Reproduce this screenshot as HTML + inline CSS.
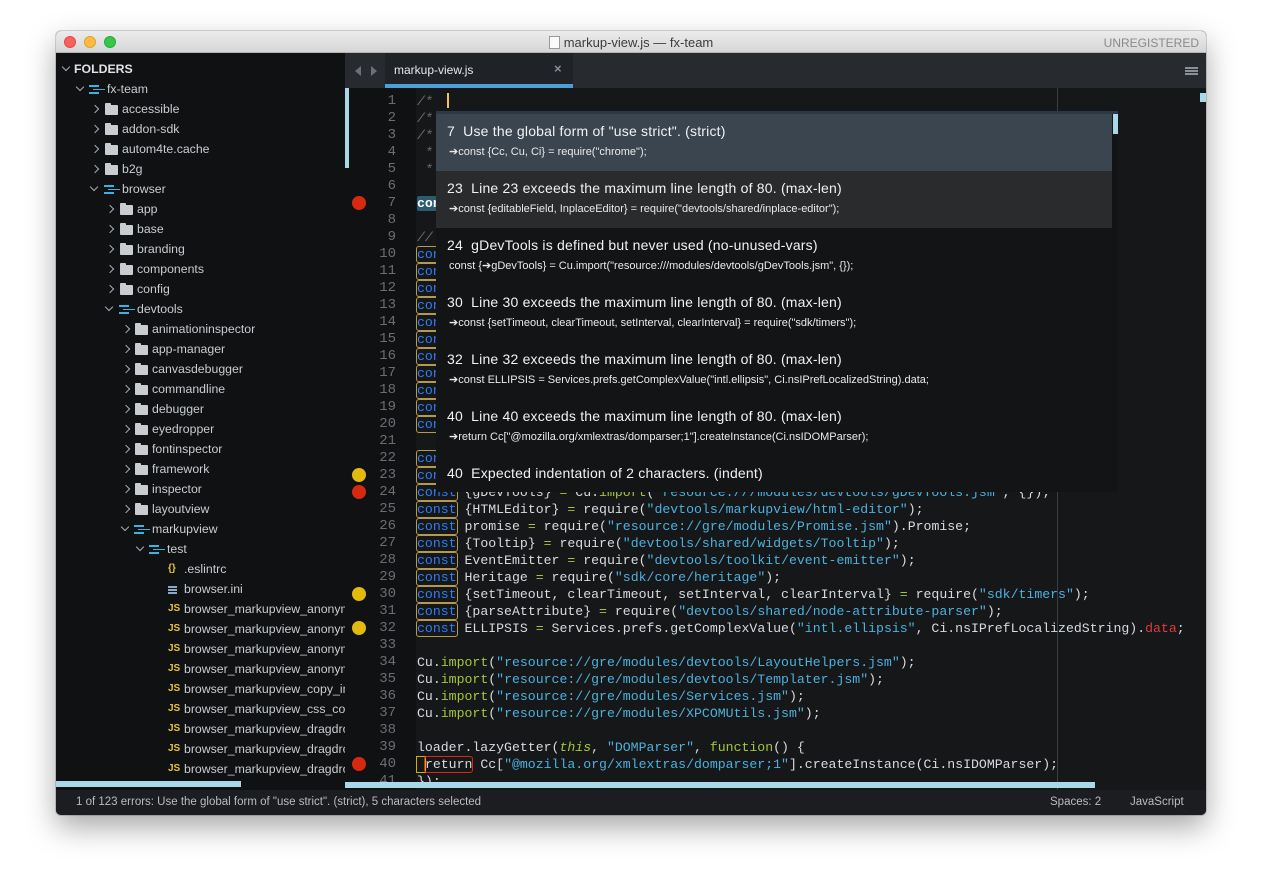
<!DOCTYPE html>
<html><head><meta charset="utf-8"><style>
*{margin:0;padding:0;box-sizing:border-box}
body{width:1262px;height:896px;background:#fff;position:relative;overflow:hidden;font-family:"Liberation Sans",sans-serif}
#win{position:absolute;left:56px;top:31px;width:1150px;height:784px;border-radius:5px;overflow:hidden;background:#161719;box-shadow:0 12px 30px rgba(0,0,0,.35),0 0 0 1px rgba(0,0,0,.15)}
#title{position:absolute;left:0;top:0;width:1150px;height:22px;background:linear-gradient(#ececec,#d6d6d6);border-bottom:1px solid #b4b4b4}
.tl{position:absolute;top:5px;width:12px;height:12px;border-radius:50%}
#ttext{position:absolute;left:0;right:0;top:4px;text-align:center;font-size:13px;color:#3c3c3c}
#unreg{position:absolute;right:7px;top:5px;font-size:12px;color:#8a8a8a}
#side{position:absolute;left:0;top:22px;width:289px;height:737px;background:#0f1113}
.row{position:absolute;height:20px;line-height:20px;font-size:12.3px;color:#c9cdd1;white-space:nowrap}
.chev{position:absolute;width:6px;height:6px;border-right:1.5px solid #aab;border-bottom:1.5px solid #aab}
.fold{position:absolute;width:13px;height:10px;background:#c9cdd1;border-radius:1px}
.fold:before{content:"";position:absolute;left:0;top:-2px;width:6px;height:3px;background:#c9cdd1;border-radius:1px 1px 0 0}
.proj{position:absolute;width:18px;height:9px}
.proj i{position:absolute;height:1.5px;background:#3fb0e0}
.js{position:absolute;font-size:10px;font-weight:bold;color:#e5c33a}
#tabbar{position:absolute;left:289px;top:22px;width:861px;height:35px;background:#272b30}
#tab{position:absolute;left:40px;top:0;width:188px;height:35px;background:#1f2226;border-bottom:4px solid #4d9fd8}
#gut{position:absolute;left:289px;top:57px;width:71px;height:702px;background:#0f1113}
.ln{position:absolute;left:0;width:51px;text-align:right;font-family:"Liberation Mono",monospace;font-size:14px;color:#6a6e73;height:17px;line-height:17px}
.dot{position:absolute;left:7px;width:14px;height:14px;border-radius:50%}
.code{position:absolute;left:361px;font-family:"Liberation Mono",monospace;font-size:13.2px;height:17px;line-height:17px;color:#d6dbe0;white-space:pre}
.k{color:#2f7cf6;outline:1px solid #b59a4e;outline-offset:0;border-radius:2px}
.s{color:#4cb1de}.g{color:#a4c63b}.r{color:#e03c3c}.c{color:#6a6e73;font-style:italic}
#pop{position:absolute;left:380px;top:80px;width:682px;height:381px;background:#131416;border-top:3px solid #2c3845}
.it{position:absolute;left:0;width:676px;height:57px}
.it b{position:absolute;left:11px;top:9px;font-size:14px;font-weight:normal;color:#f0f2f4;letter-spacing:.2px}
.it span{position:absolute;left:13px;top:31px;font-size:11px;color:#e8eaec}
#status{position:absolute;left:0;top:759px;width:1150px;height:25px;background:#1b1d20;font-size:11.5px;color:#b9bdc1;line-height:25px}
</style></head><body>
<div id="win">
<div id="title">
<div class="tl" style="left:8px;background:#fc605c;border:1px solid #de4a45"></div>
<div class="tl" style="left:28px;background:#fdbc40;border:1px solid #dea033"></div>
<div class="tl" style="left:48px;background:#34c84a;border:1px solid #27aa35"></div>
<div id="ttext"><span style="display:inline-block;width:11px;height:13px;border:1px solid #999;background:#fafafa;vertical-align:-2px;margin-right:4px"></span>markup-view.js — fx-team</div>
<div id="unreg">UNREGISTERED</div>
</div>

<div id="side">
<div style="position:absolute;left:0;top:728px;width:185px;height:6px;background:#a9d8e8"></div>
</div>
<div id="rows"></div>

<div id="tabbar">
<div style="position:absolute;left:10px;top:13px;width:0;height:0;border-top:5px solid transparent;border-bottom:5px solid transparent;border-right:6px solid #6b7078"></div>
<div style="position:absolute;left:26px;top:13px;width:0;height:0;border-top:5px solid transparent;border-bottom:5px solid transparent;border-left:6px solid #6b7078"></div>
<div id="tab"><div style="position:absolute;left:9px;top:10px;font-size:12px;color:#e6e9ec">markup-view.js</div><div style="position:absolute;left:169px;top:8px;font-size:13px;color:#8a8f95;font-weight:bold">×</div></div>
<div style="position:absolute;right:8px;top:14px;width:13px;height:2px;background:#8a9098;box-shadow:0 3px 0 #8a9098,0 6px 0 #8a9098"></div>
</div>
<div style="position:absolute;left:289px;top:57px;width:4px;height:80px;background:#a9d8e8;z-index:3"></div>
<div id="gut"></div>
<div style="position:absolute;left:1001px;top:57px;width:1px;height:702px;background:#3a3d41"></div>
<div style="position:absolute;left:1144px;top:62px;width:6px;height:9px;background:#a9d8e8"></div>
<div id="lines"></div>
<div style="position:absolute;left:289px;top:751px;width:750px;height:6px;background:#a9d8e8"></div>

<div id="pop">
<div class="it" style="top:0;background:#3b4550"><b>7&nbsp; Use the global form of "use strict". (strict)</b><span>➔const {Cc, Cu, Ci} = require("chrome");</span></div>
<div class="it" style="top:57px;background:#2a2b2d"><b>23&nbsp; Line 23 exceeds the maximum line length of 80. (max-len)</b><span>➔const {editableField, InplaceEditor} = require("devtools/shared/inplace-editor");</span></div>
<div class="it" style="top:114px"><b>24&nbsp; gDevTools is defined but never used (no-unused-vars)</b><span>const {➔gDevTools} = Cu.import("resource:///modules/devtools/gDevTools.jsm", {});</span></div>
<div class="it" style="top:171px"><b>30&nbsp; Line 30 exceeds the maximum line length of 80. (max-len)</b><span>➔const {setTimeout, clearTimeout, setInterval, clearInterval} = require("sdk/timers");</span></div>
<div class="it" style="top:228px"><b>32&nbsp; Line 32 exceeds the maximum line length of 80. (max-len)</b><span>➔const ELLIPSIS = Services.prefs.getComplexValue("intl.ellipsis", Ci.nsIPrefLocalizedString).data;</span></div>
<div class="it" style="top:285px"><b>40&nbsp; Line 40 exceeds the maximum line length of 80. (max-len)</b><span>➔return Cc["@mozilla.org/xmlextras/domparser;1"].createInstance(Ci.nsIDOMParser);</span></div>
<div class="it" style="top:342px"><b>40&nbsp; Expected indentation of 2 characters. (indent)</b></div>
<div style="position:absolute;left:677px;top:0;width:5px;height:20px;background:#a9d8e8"></div>
</div>

<div id="status"><span style="position:absolute;left:20px">1 of 123 errors: Use the global form of "use strict". (strict), 5 characters selected</span><span style="position:absolute;left:994px">Spaces: 2</span><span style="position:absolute;left:1074px">JavaScript</span></div>
</div>
<script>
var R=[
[0,'v',10,null,18,'FOLDERS',1],
[1,'v',24,'p',51,'fx-team'],
[2,'>',42,'f',66,'accessible'],[3,'>',42,'f',66,'addon-sdk'],[4,'>',42,'f',66,'autom4te.cache'],[5,'>',42,'f',66,'b2g'],
[6,'v',38,'p',66,'browser'],
[7,'>',57,'f',81,'app'],[8,'>',57,'f',81,'base'],[9,'>',57,'f',81,'branding'],[10,'>',57,'f',81,'components'],[11,'>',57,'f',81,'config'],
[12,'v',53,'p',81,'devtools'],
['animationinspector'],['app-manager'],['canvasdebugger'],['commandline'],['debugger'],['eyedropper'],['fontinspector'],['framework'],['inspector'],['layoutview'],
[23,'v',69,'p',96,'markupview'],
[24,'v',84,'p',111,'test'],
[25,null,0,'b',128,'.eslintrc'],[26,null,0,'i',128,'browser.ini'],
[27,null,0,'j',128,'browser_markupview_anonym'],[28,null,0,'j',128,'browser_markupview_anonym'],[29,null,0,'j',128,'browser_markupview_anonym'],[30,null,0,'j',128,'browser_markupview_anonym'],
[31,null,0,'j',128,'browser_markupview_copy_im'],[32,null,0,'j',128,'browser_markupview_css_com'],
[33,null,0,'j',128,'browser_markupview_dragdro'],[34,null,0,'j',128,'browser_markupview_dragdro'],[35,null,0,'j',128,'browser_markupview_dragdro']];
var h='';
R.forEach(function(r,n){
 if(r.length==1){r=[n,'>',73,'f',96,r[0]];}
 var top=69+r[0]*20-10-31;
 var out='';
 if(r[1]=='v') out+=`<div class="chev" style="left:${r[2]-3}px;top:${top+5}px;transform:rotate(45deg)"></div>`;
 if(r[1]=='>') out+=`<div class="chev" style="left:${r[2]-6}px;top:${top+7}px;transform:rotate(-45deg)"></div>`;
 var ix=r[4]-17, iy=top;
 if(r[3]=='f') out+=`<div class="fold" style="left:${ix}px;top:${iy+6}px"></div>`;
 if(r[3]=='p') out+=`<div class="proj" style="left:${ix-1}px;top:${iy+6}px"><i style="left:0;top:0;width:10px"></i><i style="left:4px;top:3.5px;width:12px"></i><i style="left:0;top:7px;width:10px"></i></div>`;
 if(r[3]=='j') out+=`<div class="js" style="left:${ix+1}px;top:${iy+4}px">JS</div>`;
 if(r[3]=='b') out+=`<div class="js" style="left:${ix+1}px;top:${iy+4}px">{}</div>`;
 if(r[3]=='i') out+=`<div style="position:absolute;left:${ix+1}px;top:${iy+7}px;width:9px;height:1.5px;background:#8aa8c8;box-shadow:0 3px 0 #8aa8c8,0 6px 0 #8aa8c8"></div>`;
 out+=`<div class="row" style="left:${r[4]}px;top:${top}px;${r[6]?'font-weight:bold;color:#e0e3e6':''}">${r[5]}</div>`;
 h+=out;
});
document.getElementById('rows').innerHTML=h;
function e(s){return s.replace(/&/g,'&amp;').replace(/</g,'&lt;')}
function hl(s){
 s=e(s);
 s=s.replace(/("[^"]*")/g,'<span class="s">$1</span>');
 s=s.replace(/^const\b/,'<span class="k">const</span>');
 s=s.replace(/ = /g,' <span class="g">=</span> ');
 s=s.replace(/\.import\(/g,'.<span class="g">import</span>(');
 return s;
}
var C={1:'/*',2:'/*',3:'/*',4:' *',5:' *',9:'//'};
var K=[10,11,12,13,14,15,16,17,18,19,20,22,23];
var code={
24:'const {gDevTools} = Cu.import("resource:///modules/devtools/gDevTools.jsm", {});',
25:'const {HTMLEditor} = require("devtools/markupview/html-editor");',
26:'const promise = require("resource://gre/modules/Promise.jsm").Promise;',
27:'const {Tooltip} = require("devtools/shared/widgets/Tooltip");',
28:'const EventEmitter = require("devtools/toolkit/event-emitter");',
29:'const Heritage = require("sdk/core/heritage");',
30:'const {setTimeout, clearTimeout, setInterval, clearInterval} = require("sdk/timers");',
31:'const {parseAttribute} = require("devtools/shared/node-attribute-parser");',
34:'Cu.import("resource://gre/modules/devtools/LayoutHelpers.jsm");',
35:'Cu.import("resource://gre/modules/devtools/Templater.jsm");',
36:'Cu.import("resource://gre/modules/Services.jsm");',
37:'Cu.import("resource://gre/modules/XPCOMUtils.jsm");',
41:'});'};
var g='',c='';
var dots={7:'#d62a10',23:'#e2b90d',24:'#d62a10',30:'#e2b90d',32:'#e2b90d',40:'#d62a10'};
for(var i=1;i<=41;i++){
 var t=62+(i-1)*17;
 g+=`<div class="ln" style="left:289px;top:${t}px">${i}</div>`;
 if(dots[i]) g+=`<div class="dot" style="left:296px;top:${t+1}px;background:${dots[i]}"></div>`;
 var s='';
 if(C[i]) s='<span class="c">'+C[i]+'</span>'+(i==1?'<span style="display:inline-block;width:2px;height:15px;background:#f2c25c;vertical-align:-3px;margin-left:14px"></span>':'');
 else if(K.indexOf(i)>=0) s='<span class="k">const</span>';
 else if(i==7) s='<span style="background:#2c5a6e;color:#fff;border-radius:2px;font-weight:bold">const</span>';
 else if(code[i]) s=hl(code[i]);
 else if(i==32) s=hl('const ELLIPSIS = Services.prefs.getComplexValue("intl.ellipsis", Ci.nsIPrefLocalizedString).')+'<span class="r">data</span>;';
 else if(i==39) s='loader.lazyGetter(<span class="g" style="font-style:italic">this</span>, <span class="s">"DOMParser"</span>, <span class="g">function</span>() {';
 else if(i==40) s='<span style="outline:1px solid #d9a812"> </span><span style="outline:1px solid #d8281a;border-radius:2px">return</span> Cc[<span class="s">"@mozilla.org/xmlextras/domparser;1"</span>].createInstance(Ci.nsIDOMParser);';
 c+=`<div class="code" style="top:${t}px">${s}</div>`;
}
document.getElementById('lines').innerHTML=g+c;
</script>
</body></html>
